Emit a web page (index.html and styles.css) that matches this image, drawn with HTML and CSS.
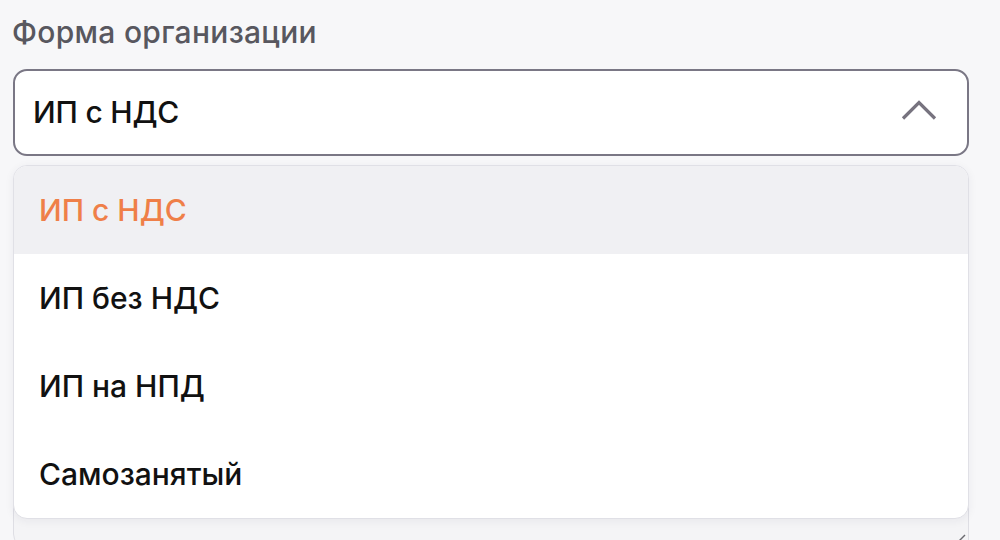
FILE: index.html
```html
<!DOCTYPE html>
<html lang="ru">
<head>
<meta charset="utf-8">
<link rel="stylesheet" href="styles.css">
</head>
<body>
<div class="form">
  <div class="label">Форма организации</div>
  <div class="field">
    <div class="select">
      <span class="value">ИП с НДС</span>
      <svg class="chevron" width="36" height="22" viewBox="0 0 36 22"><path d="M2 19.5 L18 3.5 L34 19.5" fill="none" stroke="#77737f" stroke-width="3.2"/></svg>
    </div>
    <div class="area">
      <svg class="grip" width="12" height="12" viewBox="0 0 12 12"><path d="M1 11 L11 1" stroke="#6a6a70" stroke-width="1.4"/></svg>
    </div>
    <ul class="menu">
      <li class="opt active">ИП с НДС</li>
      <li class="opt">ИП без НДС</li>
      <li class="opt">ИП на НПД</li>
      <li class="opt">Самозанятый</li>
    </ul>
  </div>
</div>
</body>
</html>
```
FILE: styles.css
```css
* { box-sizing: border-box; }
body {
  margin: 0;
  background: #f7f7f9;
  font-family: Inter, "Noto Sans", sans-serif;
  overflow: hidden;
  height: 540px;
}
.form {
  width: 956px;
  margin-left: 13px;
  padding-top: 12px;
}
.label {
  font-size: 30px;
  font-weight: 500;
  letter-spacing: 0.3px;
  color: #58575f;
  line-height: 40px;
  margin-left: -1px;
  margin-bottom: 17px;
}
.field { position: relative; }
.select {
  height: 87px;
  border: 2px solid #7a7785;
  border-radius: 14px;
  background: #fff;
  display: flex;
  align-items: center;
  justify-content: space-between;
  padding: 0 29px 0 18px;
}
.value {
  font-size: 30px;
  font-weight: 500;
  letter-spacing: -0.2px;
  color: #111;
  padding-bottom: 2px;
}
.chevron { display: block; margin-bottom: 6px; margin-right: 1px; }
.area {
  margin-top: 12px;
  height: 380px;
  border: 1px solid #dedee4;
  border-radius: 14px 14px 0 14px;
  background: #f4f4f6;
  display: flex;
  justify-content: flex-end;
  align-items: flex-end;
  padding: 0 2px 1px 0;
}
.grip { display: block; }
.menu {
  position: absolute;
  left: 0;
  right: 0;
  top: 96px;
  margin: 0;
  padding: 0;
  list-style: none;
  background: #fff;
  border: 1px solid #e0e0e6;
  border-radius: 14px;
  overflow: hidden;
  box-shadow: 0 2px 10px rgba(30, 30, 60, 0.06);
}
.opt {
  height: 88px;
  display: flex;
  align-items: center;
  padding-left: 25px;
  font-size: 30px;
  font-weight: 500;
  color: #111;
}
.opt.active {
  background: #f0f0f3;
  color: #ef7f48;
}
```
